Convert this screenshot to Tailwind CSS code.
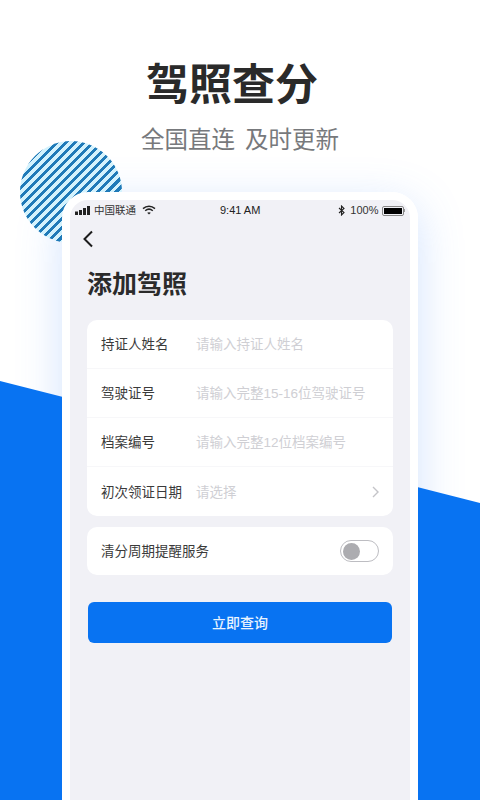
<!DOCTYPE html>
<html lang="zh-CN">
<head>
    <meta charset="UTF-8">
    <meta name="viewport" content="width=device-width, initial-scale=1.0">
    <title>驾照查分</title>
    <script src="https://cdn.jsdelivr.net/npm/@tailwindcss/browser@4"></script>
</head>
<body>
    <div class="relative w-[480px] h-[800px] overflow-hidden bg-white font-['Liberation_Sans','Noto_Sans_CJK_SC',sans-serif]">
        <!-- 手机外框的光晕，压在蓝色斜块下面 -->
        <div class="absolute left-[62px] top-[192px] w-[356px] h-[640px] rounded-t-[26px] shadow-[0_12px_45px_rgba(80,145,250,0.26)]"></div>
        <!-- 背景蓝色斜块 -->
        <svg class="absolute left-0 top-0" width="480" height="800" viewBox="0 0 480 800">
            <polygon points="0,381 480,503 480,800 0,800" fill="#0873f2"/>
        </svg>
        <!-- 条纹圆 -->
        <div class="absolute left-[20px] top-[141px] w-[102px] h-[102px] rounded-full bg-[repeating-linear-gradient(135deg,#1f7ab8_0,#1f7ab8_3px,#d3f2fd_3px,#d3f2fd_6.4px)]"></div>

        <div class="relative flex flex-col items-center">
            <h1 class="mt-[57px] mr-[16px] h-[56px] leading-[56px] text-[43px] font-bold text-[#2a2a2a]">驾照查分</h1>
            <p class="mt-[13px] h-[28px] flex gap-[10px] leading-[28px] text-[23.5px] text-[#77797c]"><span>全国直连</span><span>及时更新</span></p>

            <!-- 手机外框 -->
            <div class="mt-[38px] w-[356px] h-[640px] p-2 bg-white rounded-t-[26px]">
                <div class="h-full px-[17px] bg-[#f1f1f6] rounded-t-[18px]">
                    <!-- 状态栏 -->
                    <div class="relative -mx-[12px] h-[20px] pt-[1px] flex items-center text-[#222]">
                        <svg width="16" height="9" viewBox="0 0 16 9">
                            <rect x="0" y="5.5" width="3" height="3.5" fill="#222"/>
                            <rect x="4" y="4" width="3" height="5" fill="#222"/>
                            <rect x="8" y="2" width="3" height="7" fill="#222"/>
                            <rect x="12" y="0" width="3" height="9" fill="#222"/>
                        </svg>
                        <span class="ml-[3px] text-[10.5px] text-[#333]">中国联通</span>
                        <svg width="14" height="10" viewBox="0 0 14 10" class="ml-[6px] -mt-[2px]" fill="none" stroke="#222" stroke-width="1.5">
                            <path d="M1 3.6C4.5.5 9.5.5 13 3.6"/>
                            <path d="M3.2 5.8c2.3-2 5.3-2 7.6 0"/>
                            <path d="M7 9.6 5.2 7.8c1-.9 2.6-.9 3.6 0z" fill="#222" stroke="none"/>
                        </svg>
                        <span class="absolute left-[145px] text-[11px]">9:41 AM</span>
                        <div class="ml-auto flex items-center">
                            <svg width="7" height="11" viewBox="0 0 7 11" fill="none" stroke="#222" stroke-width="1.1">
                                <path d="M1 3 6 7.5 3.5 10V1L6 3.5 1 8"/>
                            </svg>
                            <span class="ml-[5px] text-[11px] text-[#333]">100%</span>
                            <div class="ml-[3px] flex items-center">
                                <div class="w-[22px] h-[10px] p-[1px] border border-[#888] rounded-[2px]"><div class="w-full h-full bg-black"></div></div>
                                <div class="w-[1.5px] h-[3px] bg-[#999]"></div>
                            </div>
                        </div>
                    </div>

                    <!-- 返回 -->
                    <div class="h-[36px] -ml-[5px] flex items-center pt-[2px]">
                        <svg width="12" height="18" viewBox="0 0 12 18" fill="none" stroke="#1c1c1c" stroke-width="2">
                            <path d="M10 1.5 2.5 9l7.5 7.5"/>
                        </svg>
                    </div>

                    <h2 class="mt-[10px] h-[36px] leading-[36px] text-[25px] font-bold text-[#2b2b2b]">添加驾照</h2>

                    <!-- 表单卡片 -->
                    <div class="mt-[18px] bg-white rounded-[10px] text-[13.5px]">
                        <div class="h-[49px] flex items-center px-[14px] pt-[3px] border-b border-[#f7f7f9]">
                            <span class="w-[95px] text-[#3a3a3a]">持证人姓名</span>
                            <span class="text-[#cfcfd4]">请输入持证人姓名</span>
                        </div>
                        <div class="h-[49px] flex items-center px-[14px] pt-[3px] border-b border-[#f7f7f9]">
                            <span class="w-[95px] text-[#3a3a3a]">驾驶证号</span>
                            <span class="text-[#cfcfd4]">请输入完整15-16位驾驶证号</span>
                        </div>
                        <div class="h-[49px] flex items-center px-[14px] pt-[3px] border-b border-[#f7f7f9]">
                            <span class="w-[95px] text-[#3a3a3a]">档案编号</span>
                            <span class="text-[#cfcfd4]">请输入完整12位档案编号</span>
                        </div>
                        <div class="h-[49px] flex items-center px-[14px] pt-[3px]">
                            <span class="w-[95px] text-[#3a3a3a]">初次领证日期</span>
                            <span class="text-[#cfcfd4]">请选择</span>
                            <svg class="ml-auto -mt-[3px]" width="7" height="12" viewBox="0 0 7 12" fill="none" stroke="#c4c4c8" stroke-width="1.4">
                                <path d="M1 1l5 5-5 5"/>
                            </svg>
                        </div>
                    </div>

                    <!-- 提醒开关 -->
                    <div class="mt-[11px] h-[48px] flex items-center justify-between px-[14px] bg-white rounded-[10px] text-[13.5px] text-[#3a3a3a]">
                        <span class="pt-[2px]">清分周期提醒服务</span>
                        <div class="w-[39px] h-[22px] flex items-center pl-[2px] bg-white border border-[#bdbdc2] rounded-full">
                            <div class="w-[17px] h-[17px] rounded-full bg-[#acacb0]"></div>
                        </div>
                    </div>

                    <!-- 查询按钮 -->
                    <button class="mt-[27px] ml-[1px] w-[304px] h-[41px] pt-[2px] bg-[#0873f2] rounded-[6px] text-[14px] font-medium text-[#e8f3ff]">立即查询</button>
                </div>
            </div>
        </div>
    </div>
</body>
</html>
